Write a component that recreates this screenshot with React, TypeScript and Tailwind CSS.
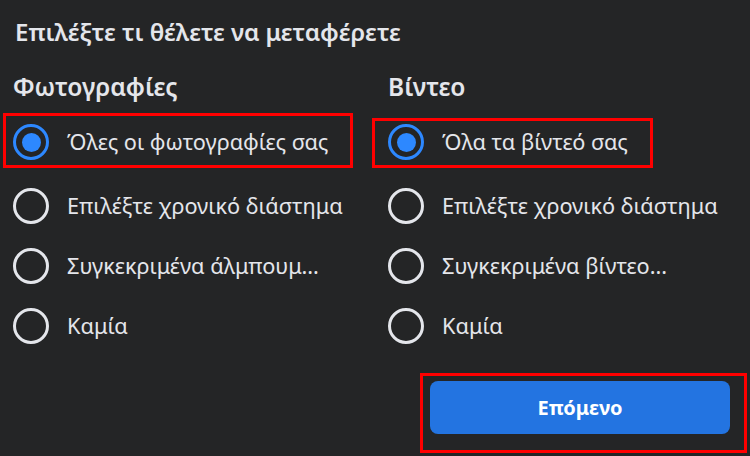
import React from "react";

function Radio({ checked }: { checked?: boolean }) {
  return checked ? (
    <div className="w-[36px] h-[36px] rounded-full border-[3px] border-[#2d88ff] flex items-center justify-center shrink-0">
      <div className="w-[19px] h-[19px] rounded-full bg-[#2d88ff]" />
    </div>
  ) : (
    <div className="w-[36px] h-[36px] rounded-full border-[3px] border-[#e4e6eb] shrink-0" />
  );
}

function Row({ label, checked, first }: { label: string; checked?: boolean; first?: boolean }) {
  return (
    <div className={`relative flex items-center gap-[18px] ${first ? "h-[56px]" : "h-[60px]"}`}>
      <Radio checked={checked} />
      <span className="text-[21.7px] leading-[30px] text-[#e4e6eb] whitespace-nowrap">{label}</span>
    </div>
  );
}

export default function App() {
  return (
    <div
      className="w-[750px] h-[456px] bg-[#242526] overflow-hidden flex flex-col"
      style={{ fontFamily: '"Noto Sans", "Open Sans", sans-serif' }}
    >
      <div className="pt-[17px] px-[15px] text-[24px] leading-[30px] font-semibold text-[#e4e6eb] whitespace-nowrap">
        Επιλέξτε τι θέλετε να μεταφέρετε
      </div>
      <div className="flex mt-[25px]">
        <div className="w-[388px] pl-[13px] flex flex-col">
          <div className="text-[24.5px] leading-[30px] font-semibold text-[#e4e6eb] h-[42px]">Φωτογραφίες</div>
          <div className="relative">
            <Row label="Όλες οι φωτογραφίες σας" checked first />
            <div className="absolute left-[-10px] top-[-1px] w-[350px] h-[55px] border-[3px] border-[#ff0000]" />
          </div>
          <div className="h-[6px]" />
          <Row label="Επιλέξτε χρονικό διάστημα" />
          <Row label="Συγκεκριμένα άλμπουμ..." />
          <Row label="Καμία" />
        </div>
        <div className="flex-1 flex flex-col">
          <div className="text-[24.5px] leading-[30px] font-semibold text-[#e4e6eb] h-[42px]">Βίντεο</div>
          <div className="relative">
            <Row label="Όλα τα βίντεό σας" checked first />
            <div className="absolute left-[-16px] top-[4px] w-[281px] h-[50px] border-[3px] border-[#ff0000]" />
          </div>
          <div className="h-[6px]" />
          <Row label="Επιλέξτε χρονικό διάστημα" />
          <Row label="Συγκεκριμένα βίντεο..." />
          <Row label="Καμία" />
        </div>
      </div>
      <div className="flex justify-end pr-[20px] mt-[25px]">
        <div className="relative">
          <button className="w-[300px] h-[53px] rounded-[8px] bg-[#2374e1] text-white text-[20px] font-bold">
            Επόμενο
          </button>
          <div className="absolute left-[-10px] top-[-8px] w-[327px] h-[80px] border-[3px] border-[#ff0000]" />
        </div>
      </div>
    </div>
  );
}
